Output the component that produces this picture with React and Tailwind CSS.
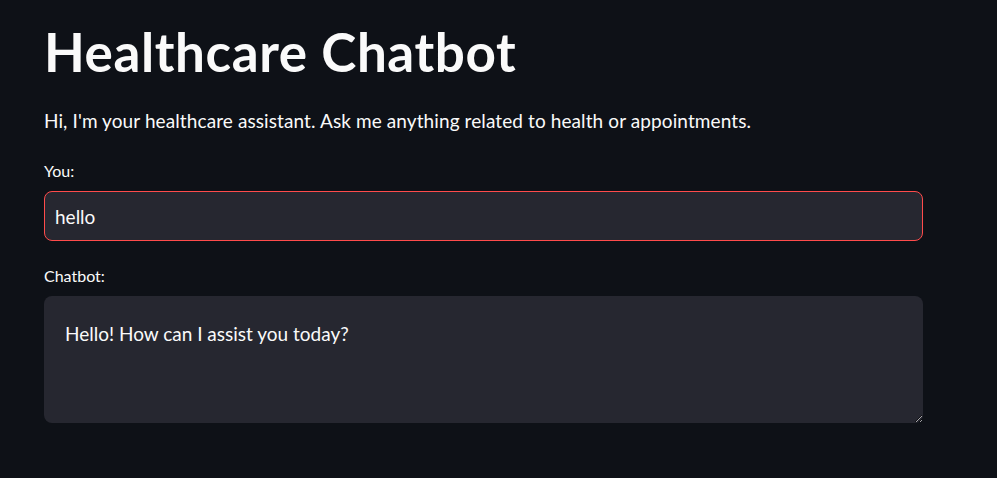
import { useState } from 'react';

export default function App() {
  const [msg, setMsg] = useState('hello');
  const [reply, setReply] = useState('Hello! How can I assist you today?');

  return (
    <div
      className="min-h-[478px] w-full bg-[#0e1117] text-[#fafafa]"
      style={{ fontFamily: 'Lato, "Noto Sans", sans-serif' }}
    >
      <div className="w-[879px] ml-[44px] pt-[20px]">
        {/* Titulo */}
        <h1 className="text-[53px] font-bold leading-[64px] tracking-[0.6px]">Healthcare Chatbot</h1>

        <p className="mt-[24px] text-[19px] leading-[26px] tracking-[0.1px]">
          Hi, I'm your healthcare assistant. Ask me anything related to health or appointments.
        </p>

        {/* Entrada del usuario */}
        <label className="block mt-[27px] text-[16px] leading-[20px]">You:</label>
        <input
          value={msg}
          onChange={(e) => setMsg(e.target.value)}
          className="mt-[10px] block w-full h-[50px] rounded-lg border border-[#ff4b4b] bg-[#262730] px-[10px] text-[19px] text-[#fafafa] outline-none"
        />

        {/* Respuesta */}
        <label className="block mt-[25px] text-[16px] leading-[20px]">Chatbot:</label>
        <textarea
          value={reply}
          onChange={(e) => setReply(e.target.value)}
          className="mt-[10px] block w-full h-[127px] rounded-lg bg-[#262730] px-[21px] pt-[25px] pb-[20px] text-[19px] leading-[26px] text-[#fafafa] outline-none"
        />
      </div>
    </div>
  );
}
